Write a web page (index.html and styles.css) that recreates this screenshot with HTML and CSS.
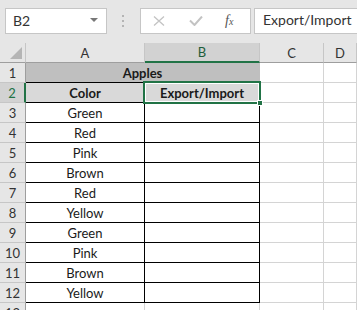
FILE: index.html
```html
<!DOCTYPE html>
<html lang="en">
  <head>
    <meta charset="UTF-8" />
    <title>Apples sheet</title>
    <link rel="stylesheet" href="styles.css">
  </head>
  <body>
    <div class="toolbar">
      <div class="namebox">
        <span>B2</span>
        <svg class="caret" width="8" height="5" viewBox="0 0 8 5"><path d="M0 0h8L4 4z" fill="#777"/></svg>
      </div>
      <svg class="grip" width="3" height="12" viewBox="0 0 3 12">
        <rect x="0" y="0" width="2" height="2" fill="#b4b4b4"/>
        <rect x="0" y="5" width="2" height="2" fill="#b4b4b4"/>
        <rect x="0" y="10" width="2" height="2" fill="#b4b4b4"/>
      </svg>
      <div class="fxbox">
        <svg class="cancel" width="12" height="10" viewBox="0 0 12 10"><path d="M1 0.5l10 9M11 0.5l-10 9" stroke="#c3c3c3" stroke-width="1.3"/></svg>
        <svg class="enter" width="14" height="10" viewBox="0 0 14 10"><path d="M1 4.5l4.5 4.5 7.5-8.5" stroke="#c3c3c3" stroke-width="2" fill="none"/></svg>
        <span class="fx">f<sub>x</sub></span>
      </div>
      <div class="formula">Export/Import</div>
    </div>

    <div class="sheet">
      <div class="corner"><span class="tri"></span></div>
      <div class="colhead">A</div>
      <div class="colhead active">B</div>
      <div class="colhead">C</div>
      <div class="colhead">D</div>

      <div class="rowhead">1</div>
      <div class="cell title">Apples</div>
      <div class="cell"></div>
      <div class="cell"></div>

      <div class="rowhead active">2</div>
      <div class="cell head">Color</div>
      <div class="cell head edge selected">Export/Import<span class="handle"></span></div>
      <div class="cell"></div>
      <div class="cell"></div>

      <div class="rowhead">3</div><div class="cell data">Green</div><div class="cell data edge"></div><div class="cell"></div><div class="cell"></div>
      <div class="rowhead">4</div><div class="cell data">Red</div><div class="cell data edge"></div><div class="cell"></div><div class="cell"></div>
      <div class="rowhead">5</div><div class="cell data">Pink</div><div class="cell data edge"></div><div class="cell"></div><div class="cell"></div>
      <div class="rowhead">6</div><div class="cell data">Brown</div><div class="cell data edge"></div><div class="cell"></div><div class="cell"></div>
      <div class="rowhead">7</div><div class="cell data">Red</div><div class="cell data edge"></div><div class="cell"></div><div class="cell"></div>
      <div class="rowhead">8</div><div class="cell data">Yellow</div><div class="cell data edge"></div><div class="cell"></div><div class="cell"></div>
      <div class="rowhead">9</div><div class="cell data">Green</div><div class="cell data edge"></div><div class="cell"></div><div class="cell"></div>
      <div class="rowhead">10</div><div class="cell data">Pink</div><div class="cell data edge"></div><div class="cell"></div><div class="cell"></div>
      <div class="rowhead">11</div><div class="cell data">Brown</div><div class="cell data edge"></div><div class="cell"></div><div class="cell"></div>
      <div class="rowhead">12</div><div class="cell data">Yellow</div><div class="cell data edge"></div><div class="cell"></div><div class="cell"></div>
      <div class="rowhead">13</div><div class="cell"></div><div class="cell"></div><div class="cell"></div><div class="cell"></div>
    </div>
  </body>
</html>
```

FILE: styles.css
```css
* {
  margin: 0;
  padding: 0;
  box-sizing: border-box;
}

body {
  font-family: Lato, "Open Sans", sans-serif;
  font-size: 13px;
  color: #1a1a1a;
  background-color: #e6e6e6;
  width: 357px;
  height: 310px;
  overflow: hidden;
}

/* formula bar */
.toolbar {
  height: 43px;
  display: flex;
  align-items: center;
  padding: 0 0 2px 5px;
}

.namebox {
  width: 102px;
  height: 26px;
  background-color: #fff;
  border: 1px solid #c6c6c6;
  display: flex;
  align-items: center;
  justify-content: space-between;
  padding: 0 8px 0 7px;
  font-size: 14px;
  color: #333;
}

.grip {
  margin: 0 15px 0 15px;
}

.fxbox {
  width: 111px;
  height: 26px;
  background-color: #fff;
  border: 1px solid #c6c6c6;
  display: flex;
  align-items: center;
  padding: 0 0 0 12px;
}

.enter {
  margin-left: 24px;
}

.fx {
  margin-left: 22px;
  font-family: "Liberation Serif", serif;
  font-style: italic;
  font-size: 14px;
  color: #555;
}

.fx sub {
  font-size: 10px;
  vertical-align: 0;
}

.formula {
  flex: 1;
  height: 26px;
  margin-left: 3px;
  background-color: #fff;
  border: 1px solid #c6c6c6;
  border-right: none;
  padding: 2px 0 0 8px;
  font-size: 14px;
  color: #333;
  white-space: nowrap;
}

/* grid */
.sheet {
  display: grid;
  grid-template-columns: 26px 119px 115px 64px 1fr;
  grid-auto-rows: 20px;
  background-color: #fff;
}

.corner,
.colhead,
.rowhead {
  background-color: #e6e6e6;
  border-right: 1px solid #c6c6c6;
  border-bottom: 1px solid #9e9e9e;
  display: flex;
  align-items: center;
  justify-content: center;
  color: #333;
  font-size: 13px;
}

.corner {
  position: relative;
}

.tri {
  position: absolute;
  right: 3px;
  bottom: 3px;
  width: 0;
  height: 0;
  border-left: 12px solid transparent;
  border-bottom: 12px solid #b5b5b5;
}

.colhead.active {
  background-color: #d2d2d2;
  border-bottom: 2px solid #217346;
  color: #1e5e3a;
}

.rowhead {
  border-bottom-color: #c6c6c6;
  border-right-color: #9e9e9e;
}

.rowhead.active {
  background-color: #d2d2d2;
  border-right: 2px solid #217346;
  color: #217346;
}

.cell {
  border-right: 1px solid #d4d4d4;
  border-bottom: 1px solid #d4d4d4;
  display: flex;
  align-items: center;
  justify-content: center;
  white-space: nowrap;
}

.title {
  grid-column: span 2;
  background-color: #bfbfbf;
  border-bottom: 1px solid #000;
  border-right-color: #bfbfbf;
  font-weight: bold;
}

.head {
  background-color: #d9d9d9;
  font-weight: bold;
}

.head,
.data {
  border-right-color: #000;
  border-bottom-color: #000;
}

.selected {
  position: relative;
}

.selected::after {
  content: "";
  position: absolute;
  left: -2px;
  top: -2px;
  right: -2px;
  bottom: -2px;
  border: 2px solid #217346;
  box-shadow: inset 0 0 0 1px #fff;
}

.handle {
  position: absolute;
  right: -4px;
  bottom: -4px;
  width: 6px;
  height: 6px;
  background-color: #217346;
  border: 1px solid #fff;
  z-index: 1;
}
```
